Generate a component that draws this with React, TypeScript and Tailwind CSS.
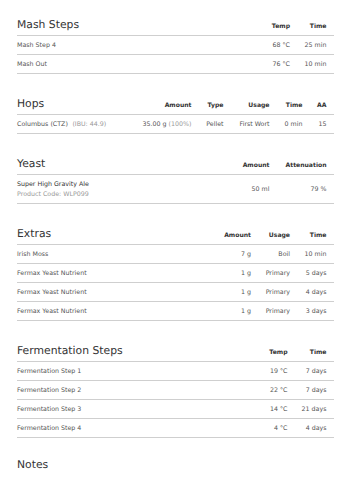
import type { ReactNode } from "react"

const font = { fontFamily: '"DejaVu Sans", Verdana, sans-serif' }

function Section({
  title,
  cols,
  template,
  children,
  first,
}: {
  title: string
  cols: string[]
  template: string
  children: ReactNode
  first?: boolean
}) {
  return (
    <div className={first ? "" : "mt-[23px]"}>
      <div className={`grid ${template} items-baseline h-[18px] border-b border-[#cfcfcf] pr-[7.5px]`}>
        <h2 className="text-[10.8px] leading-[13px] font-normal text-[#333]">{title}</h2>
        {cols.map((c) => (
          <div key={c} className="text-right text-[6.1px] leading-[9px] font-bold text-[#333]">
            {c}
          </div>
        ))}
      </div>
      {children}
    </div>
  )
}

function Row({ template, cells, tall }: { template: string; cells: ReactNode[]; tall?: boolean }) {
  return (
    <div
      className={`grid ${template} items-center ${tall ? "h-[29px]" : "h-[19px]"} border-b border-[#cfcfcf] pr-[7.5px] pt-[1px] text-[6.3px] leading-[9.3px] text-[#555]`}
    >
      {cells.map((c, i) => (
        <div key={i} className={i === 0 ? "text-left" : "text-right"}>
          {c}
        </div>
      ))}
    </div>
  )
}

const mashT = "grid-cols-[1fr_40px_36.5px]"
const hopsT = "grid-cols-[1fr_60px_32px_46px_33px_24px]"
const yeastT = "grid-cols-[1fr_60px_57px]"
const extrasT = "grid-cols-[1fr_40px_39px_36.5px]"
const fermT = "grid-cols-[1fr_40px_39px]"

export default function App() {
  return (
    <div
      className="bg-white w-[353px] h-[500px] overflow-hidden pl-[17px] pr-[19px] pt-[18px] antialiased [text-rendering:geometricPrecision]"
      style={font}
    >
      <Section first title="Mash Steps" cols={["Temp", "Time"]} template={mashT}>
        <Row template={mashT} cells={["Mash Step 4", "68 °C", "25 min"]} />
        <Row template={mashT} cells={["Mash Out", "76 °C", "10 min"]} />
      </Section>

      <Section title="Hops" cols={["Amount", "Type", "Usage", "Time", "AA"]} template={hopsT}>
        <Row
          template={hopsT}
          cells={[
            <span>
              Columbus (CTZ)<span className="ml-[4.5px] text-[#999]">(IBU: 44.9)</span>
            </span>,
            <span>
              35.00 g <span className="text-[#999]">(100%)</span>
            </span>,
            "Pellet",
            "First Wort",
            "0 min",
            "15",
          ]}
        />
      </Section>

      <Section title="Yeast" cols={["Amount", "Attenuation"]} template={yeastT}>
        <Row
          tall
          template={yeastT}
          cells={[
            <div>
              <div className="text-[#333]">Super High Gravity Ale</div>
              <div className="text-[#999]">Product Code: WLP099</div>
            </div>,
            "50 ml",
            "79 %",
          ]}
        />
      </Section>

      <Section title="Extras" cols={["Amount", "Usage", "Time"]} template={extrasT}>
        <Row template={extrasT} cells={["Irish Moss", "7 g", "Boil", "10 min"]} />
        <Row template={extrasT} cells={["Fermax Yeast Nutrient", "1 g", "Primary", "5 days"]} />
        <Row template={extrasT} cells={["Fermax Yeast Nutrient", "1 g", "Primary", "4 days"]} />
        <Row template={extrasT} cells={["Fermax Yeast Nutrient", "1 g", "Primary", "3 days"]} />
      </Section>

      <Section title="Fermentation Steps" cols={["Temp", "Time"]} template={fermT}>
        <Row template={fermT} cells={["Fermentation Step 1", "19 °C", "7 days"]} />
        <Row template={fermT} cells={["Fermentation Step 2", "22 °C", "7 days"]} />
        <Row template={fermT} cells={["Fermentation Step 3", "14 °C", "21 days"]} />
        <Row template={fermT} cells={["Fermentation Step 4", "4 °C", "4 days"]} />
      </Section>

      <h2 className="mt-[20px] text-[10.8px] leading-[13px] font-normal text-[#333]">Notes</h2>
    </div>
  )
}
